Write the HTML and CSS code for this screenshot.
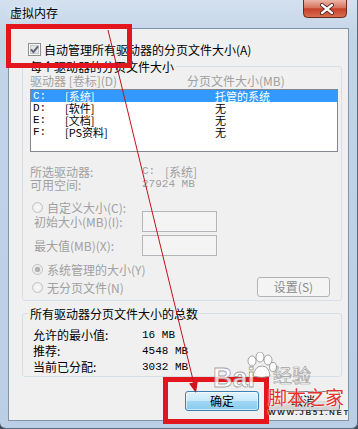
FILE: index.html
```html
<!DOCTYPE HTML>
<html>
<head>
  <meta charset="UTF-8">
  <title>虚拟内存</title>
  <link rel="stylesheet" href="styles.css">
</head>
<body>

  <div class="window">
    <div class="titlebar">
      <span class="title">虚拟内存</span>
      <button class="close">
        <svg width="44" height="18" viewBox="0 0 44 18">
          <defs>
            <linearGradient id="closeBg" x1="0" y1="0" x2="0" y2="1">
              <stop offset="0" stop-color="#ebb6a8"/>
              <stop offset="0.45" stop-color="#d6725c"/>
              <stop offset="0.5" stop-color="#c6402a"/>
              <stop offset="1" stop-color="#d9704f"/>
            </linearGradient>
          </defs>
          <path d="M0.5 0 V13.5 Q0.5 17.5 4.5 17.5 H39.5 Q43.5 17.5 43.5 13.5 V0" fill="url(#closeBg)" stroke="#6d2a1d"/>
          <path d="M19 5 L29 13 M29 5 L19 13" stroke="#40170f" stroke-width="4" stroke-linecap="round"/>
          <path d="M19 5 L29 13 M29 5 L19 13" stroke="#fff" stroke-width="2.3" stroke-linecap="round"/>
        </svg>
      </button>
    </div>

    <div class="client">
      <label class="auto">
        <span class="checkbox">
          <svg width="13" height="13" viewBox="0 0 13 13">
            <rect x="0.5" y="0.5" width="12" height="12" fill="#f6f6f6" stroke="#8e8f8f"/>
            <rect x="2.5" y="2.5" width="8" height="8" fill="#e4e4e4" stroke="#c8c8c8"/>
            <path d="M3 6.3 L5.4 9 L10 3.4" fill="none" stroke="#556075" stroke-width="1.8"/>
          </svg>
        </span>
        自动管理所有驱动器的分页文件大小(A)
      </label>

      <fieldset class="group drives">
        <legend>每个驱动器的分页文件大小</legend>
        <div class="list-head">
          <span class="col-drive">驱动器 [卷标](D)</span>
          <span>分页文件大小(MB)</span>
        </div>
        <ul class="drive-list">
          <li class="selected"><span class="letter">C:</span><span class="vol">[系统]</span><span>托管的系统</span></li>
          <li><span class="letter">D:</span><span class="vol">[软件]</span><span>无</span></li>
          <li><span class="letter">E:</span><span class="vol">[文档]</span><span>无</span></li>
          <li><span class="letter">F:</span><span class="vol">[PS资料]</span><span>无</span></li>
        </ul>

        <div class="info-row first">
          <span class="info-label">所选驱动器:</span>
          <span class="letter-sm">C:</span><span>[系统]</span>
        </div>
        <div class="info-row">
          <span class="info-label">可用空间:</span>
          <span class="num">27924 MB</span>
        </div>

        <div class="radio-row custom"><span class="radio"></span>自定义大小(C):</div>
        <div class="field-row first">
          <span class="field-label">初始大小(MB)(I):</span>
          <span class="textbox"></span>
        </div>
        <div class="field-row">
          <span class="field-label">最大值(MB)(X):</span>
          <span class="textbox"></span>
        </div>
        <div class="radio-row system"><span class="radio checked"></span>系统管理的大小(Y)</div>
        <div class="radio-row none">
          <span class="radio"></span>无分页文件(N)
          <button class="btn set">设置(S)</button>
        </div>
      </fieldset>

      <fieldset class="group totals">
        <legend>所有驱动器分页文件大小的总数</legend>
        <div class="total-row"><span class="total-label">允许的最小值:</span><span class="num">16 MB</span></div>
        <div class="total-row"><span class="total-label">推荐:</span><span class="num">4548 MB</span></div>
        <div class="total-row"><span class="total-label">当前已分配:</span><span class="num">3032 MB</span></div>
      </fieldset>

      <div class="actions">
        <button class="btn ok">确定</button>
        <button class="btn">取消</button>
      </div>
    </div>
  </div>

  <div class="mark mark-top"></div>
  <div class="mark mark-ok"></div>

  <svg class="arrow" width="358" height="429" viewBox="0 0 358 429">
    <line x1="108" y1="30" x2="194" y2="384" stroke="#c3121a" stroke-width="1"/>
    <polygon points="196,393 197.8,381.2 189,383.4" fill="#d4141c"/>
  </svg>

  <div class="baidu">
    <span class="bai">Bai</span>
    <svg class="paw" width="36" height="28" viewBox="0 0 36 28">
      <g fill="rgba(255,255,255,0.8)" stroke="rgba(110,110,110,0.6)" stroke-width="1">
        <ellipse cx="9" cy="9" rx="4" ry="5"/>
        <ellipse cx="17" cy="5" rx="4" ry="5"/>
        <ellipse cx="25" cy="8" rx="4" ry="5"/>
        <ellipse cx="30" cy="15" rx="3.5" ry="4.5"/>
        <path d="M10 24 Q12 14 19 14 Q26 14 27 24 Q19 27 10 24 Z"/>
      </g>
    </svg>
    <span class="jy">经验</span>
  </div>

  <div class="jb51">
    <span class="jb51-name">脚本之家</span>
    <span class="jb51-url">WWW.JB51.NET</span>
  </div>

</body>
</html>
```

FILE: styles.css
```css
* {
  box-sizing: border-box;
}
body {
  margin: 0;
  width: 358px;
  height: 429px;
  overflow: hidden;
  position: relative;
  background: #3f4750;
  font-family: "Noto Sans CJK SC", sans-serif;
  font-size: 12px;
  color: #000;
}

/* window frame */
.window {
  height: 429px;
  padding: 0 8px 7px 8px;
  background: linear-gradient(#d3e0ef, #c2d4e8 40px, #bacee5);
  border-right: 1px solid #5b6b7c;
  border-bottom: 1px solid #5b6b7c;
  border-radius: 0 0 6px 6px;
  display: flex;
  flex-direction: column;
}
.titlebar {
  height: 28px;
  display: flex;
  justify-content: space-between;
  align-items: flex-start;
}
.title {
  margin: 6px 0 0 2px;
  line-height: 14px;
  text-shadow: 0 0 6px rgba(255, 255, 255, 0.9);
}
.close {
  margin: 0 2px 0 0;
  padding: 0;
  border: 0;
  background: none;
  width: 44px;
  height: 18px;
  display: block;
}
.close svg {
  display: block;
}
.client {
  height: 393px;
  border: 1px solid #8193a8;
  background: #f0f0f0;
}

/* auto manage checkbox */
.auto {
  margin-top: 14px;
  padding-left: 19px;
  height: 13px;
  line-height: 13px;
  display: flex;
  align-items: center;
  gap: 3px;
}
.checkbox svg {
  display: block;
}

/* group boxes */
.group {
  margin: 0 0 0 13px;
  width: 320px;
  min-width: 0;
  border: 1px solid #d5dfe5;
  border-radius: 3px;
  padding: 1px 2px 3px 7px;
}
.group legend {
  padding: 0 2px;
  margin-left: -2px;
  line-height: 13px;
  height: 13px;
}
.drives {
  margin-top: 4px;
}
.totals {
  margin-top: 6px;
  padding: 7px 2px 1px 7px;
}

.list-head {
  display: flex;
  height: 13px;
  line-height: 13px;
  color: #a0a0a0;
}
.col-drive {
  width: 157px;
}
.drive-list {
  margin: 2px 0 0;
  padding: 0;
  list-style: none;
  width: 308px;
  height: 63px;
  border: 1px solid #828790;
  background: #fff;
}
.drive-list li {
  display: flex;
  height: 12px;
  line-height: 12px;
  padding-left: 2px;
  font-size: 11px;
}
.drive-list li.selected {
  background: #3399ff;
  color: #fff;
}
.letter {
  width: 32px;
  font-family: "Liberation Mono", monospace;
}
.vol {
  width: 150px;
}

.info-row {
  display: flex;
  height: 13px;
  line-height: 13px;
  color: #a0a0a0;
}
.info-row.first {
  margin-top: 13px;
}
.info-label {
  width: 112px;
}
.letter-sm {
  width: 23px;
  font-family: "Liberation Mono", monospace;
  font-size: 11px;
}
.num {
  font-family: "Liberation Mono", monospace;
  font-size: 11px;
}

/* radios and fields */
.radio-row {
  display: flex;
  align-items: center;
  gap: 4px;
  height: 12px;
  padding-left: 2px;
  color: #a0a0a0;
}
.radio-row.custom {
  margin-top: 10px;
}
.radio-row.system {
  margin-top: 7px;
}
.radio-row.none {
  margin-top: 2px;
  height: 20px;
}
.radio {
  width: 11px;
  height: 11px;
  border-radius: 50%;
  border: 1px solid #c3c3c3;
  background: radial-gradient(circle, #fbfbfb, #e6e6e6);
  flex: none;
}
.radio.checked {
  background: radial-gradient(circle, #b2b2b2 0, #b2b2b2 2.5px, #ececec 3px);
}
.field-row {
  display: flex;
  align-items: center;
  height: 21px;
  padding-left: 4px;
  color: #a0a0a0;
  margin-top: 3px;
}
.field-row.first {
  margin-top: -2px;
}
.field-label {
  width: 108px;
}
.textbox {
  width: 75px;
  height: 21px;
  border: 1px solid #b3b7bb;
  background: #f4f4f4;
}

/* buttons */
.btn {
  width: 74px;
  height: 20px;
  padding: 0;
  font-family: "Noto Sans CJK SC", sans-serif;
  font-size: 12px;
  line-height: 18px;
  color: #000;
  border: 1px solid #707070;
  border-radius: 3px;
  background: linear-gradient(#f2f2f2 0%, #ebebeb 49%, #dddddd 50%, #cfcfcf 100%);
}
.btn.set {
  width: 73px;
  margin-left: auto;
  margin-right: 9px;
  color: #8a8a8a;
  border-color: #b0b4b8;
  background: #f4f4f4;
}
.btn.ok {
  border-color: #3c7fb1;
  background: linear-gradient(#e2f3fc 0%, #c6e8fa 49%, #a2d8f5 50%, #88cbee 100%);
  box-shadow: inset 0 0 0 1px rgba(255, 255, 255, 0.6);
}

.total-row {
  display: flex;
  height: 16px;
  line-height: 16px;
  padding-left: 3px;
}
.total-label {
  width: 109px;
}

.actions {
  margin-top: 14px;
  display: flex;
  justify-content: flex-end;
  gap: 7px;
  padding-right: 8px;
}

/* annotations laid over the screenshot */
.mark {
  position: absolute;
  border: 5px solid #e3161e;
}
.mark-top {
  left: 6px;
  top: 24px;
  width: 126px;
  height: 44px;
}
.mark-ok {
  left: 163px;
  top: 377px;
  width: 106px;
  height: 47px;
}
.arrow {
  position: absolute;
  left: 0;
  top: 0;
  pointer-events: none;
}

.baidu {
  position: absolute;
  left: 213px;
  top: 352px;
  display: flex;
  align-items: flex-start;
}
.bai {
  margin-top: 12px;
  font-family: "Liberation Sans", sans-serif;
  font-weight: bold;
  font-size: 27px;
  line-height: 28px;
  color: rgba(255, 255, 255, 0.75);
  -webkit-text-stroke: 0.8px rgba(100, 100, 100, 0.6);
}
.paw {
  margin-left: -12px;
}
.jy {
  margin: 13px 0 0 -6px;
  font-size: 19px;
  line-height: 20px;
  color: rgba(255, 255, 255, 0.75);
  -webkit-text-stroke: 0.7px rgba(100, 100, 100, 0.6);
}

.jb51 {
  position: absolute;
  left: 268px;
  top: 385px;
  display: flex;
  flex-direction: column;
  text-shadow: 0 0 2px #fff, 0 0 2px #fff;
}
.jb51-name {
  font-size: 19px;
  line-height: 23px;
  color: #e4312b;
}
.jb51-url {
  font-family: "Liberation Sans", sans-serif;
  font-weight: bold;
  font-size: 8px;
  line-height: 9px;
  letter-spacing: 1.7px;
  color: #2a2a2a;
}
```
